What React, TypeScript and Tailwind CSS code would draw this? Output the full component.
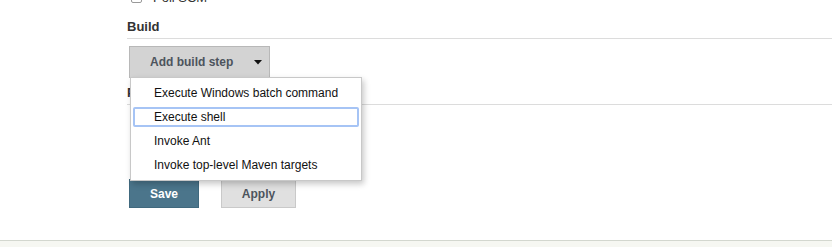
const steps = [
  'Execute Windows batch command',
  'Execute shell',
  'Invoke Ant',
  'Invoke top-level Maven targets',
];

function Section({ title }: { title: string }) {
  return (
    <div className="pr-0 border-b border-[#dcdcdc] pb-[3px] text-[13px] leading-[16px] font-bold text-[#333]">
      {title}
    </div>
  );
}

export default function App() {
  const selected = 'Execute shell';

  return (
    <div
      className="relative w-[832px] h-[247px] overflow-hidden bg-white flex flex-col"
      style={{ fontFamily: '"Liberation Sans", Arial, sans-serif' }}
    >
      <div className="relative flex-1 pl-[127px]">
        {/* Poll SCM row, scrolled mostly out of view */}
        <div className="mt-[-9px] h-[13px] flex items-center gap-[11px] pl-[4px] text-[13px] text-[#333]">
          <span className="w-[11px] h-[11px] rounded-[2px] border border-[#999] bg-white" />
          <span>Poll SCM</span>
        </div>

        <div className="mt-[15px]">
          <Section title="Build" />
        </div>

        <div className="mt-[7px] ml-[2px]">
          <button className="flex items-center w-[141px] h-[32px] border border-[#b8b8b8] bg-[#d3d3d3] pl-[20px] text-[12px] font-bold text-[#4d545d]">
            <span>Add build step</span>
            <svg className="ml-[21px]" width="8" height="5" viewBox="0 0 8 5">
              <path d="M0 0h8L4 4.5z" fill="#111" />
            </svg>
          </button>
        </div>

        <div className="mt-[7px]">
          <Section title="Post-build Actions" />
        </div>

        <div className="mt-[74px] ml-[2px] flex gap-[22px]">
          <button className="w-[70px] h-[29px] border border-[#40697e] bg-[#4b758b] text-[12px] font-bold text-white">
            Save
          </button>
          <button className="w-[75px] h-[29px] border border-[#c9c9c9] bg-[#e0e0e0] text-[12px] font-bold text-[#4d545d]">
            Apply
          </button>
        </div>

        {/* dropdown menu */}
        <ul className="absolute left-[130px] top-[77px] w-[232px] flex flex-col border border-[#c8c8c8] bg-white pt-[3px] pb-[3px] shadow-[2px_3px_6px_rgba(0,0,0,0.22)]">
          {steps.map((s) => (
            <li
              key={s}
              className={
                'mx-[2px] my-[2px] h-[20px] flex items-center pl-[19px] rounded-[2px] border-2 text-[12px] text-[#111] ' +
                (s === selected ? 'border-[#a6c4f5]' : 'border-transparent')
              }
            >
              {s}
            </li>
          ))}
        </ul>
      </div>

      <div className="h-[7px] border-t border-[#d3d7cf] bg-[#f6f7f2]" />
    </div>
  );
}
